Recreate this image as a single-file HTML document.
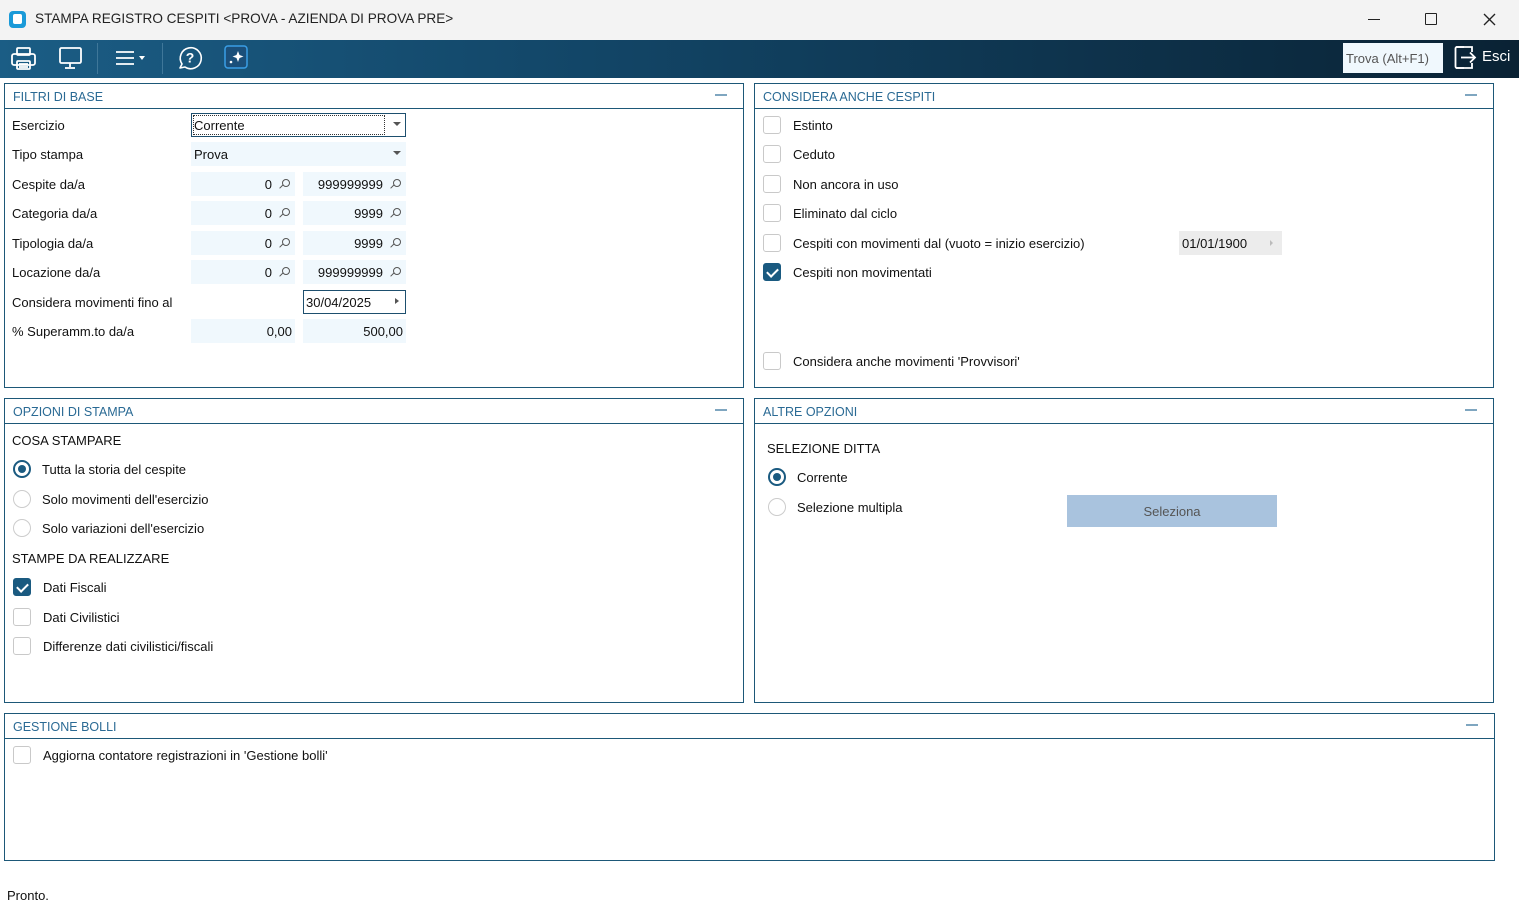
<!DOCTYPE html>
<html><head><meta charset="utf-8"><style>
*{box-sizing:border-box;margin:0;padding:0}
body{width:1519px;height:912px;background:#fff;font-family:"Liberation Sans","DejaVu Sans",sans-serif;font-size:13px;color:#111;position:relative;overflow:hidden}
.a{position:absolute}
.t{position:absolute;white-space:nowrap;line-height:14px;margin-top:0px}
.panel{position:absolute;border:1px solid #1d5878}
.ph{height:25px;border-bottom:1px solid #1d5878;color:#2a6a94;padding:6px 8px;font-size:12.5px;line-height:14px}
.min{position:absolute;right:16px;top:10px;width:12px;height:2px;background:#7fa6c0}
.cb{position:absolute;width:18px;height:18px;border:1px solid #c9c9c9;border-radius:3px;background:#fff}
.cb.on{background:#1a5a80;border-color:#1a5a80}
.cb.on::after{content:"";position:absolute;left:5px;top:2px;width:5px;height:9px;border:solid #fff;border-width:0 2px 2px 0;transform:rotate(45deg)}
.rd{position:absolute;width:18px;height:18px;border:1.5px solid #ccc;border-radius:50%}
.rd.on{border:2px solid #1a5a80}
.rd.on::after{content:"";position:absolute;left:3px;top:3px;width:8px;height:8px;border-radius:50%;background:#1a5a80}
.f{position:absolute;height:24px;background:#f0f8fd;text-align:right;padding-right:23px;line-height:25px}
.f.noi{padding-right:3px}
.lens{position:absolute;right:5px;top:7px;width:8px;height:8px;border:1.3px solid #555;border-radius:50%}
.lens::after{content:"";position:absolute;left:-4px;top:6px;width:5px;height:1.4px;background:#555;transform:rotate(-45deg)}
</style></head><body>
<div class="a" style="left:0;top:0;width:1519px;height:40px;background:#f3f3f3"></div>
<div class="a" style="left:9px;top:11px;width:17px;height:17px;border-radius:4px;background:#1a9ad8"></div>
<div class="a" style="left:13px;top:14px;width:9px;height:10px;border-radius:2px;background:#fff"></div>
<div class="t" style="left:35px;top:12px;font-size:13.6px;color:#222">STAMPA REGISTRO CESPITI &lt;PROVA - AZIENDA DI PROVA PRE&gt;</div>
<div class="a" style="left:1368px;top:19px;width:12px;height:1px;background:#222"></div>
<div class="a" style="left:1425px;top:13px;width:12px;height:12px;border:1.3px solid #222;border-radius:1px"></div>
<svg class="a" style="left:1483px;top:13px" width="13" height="13" stroke="#222" stroke-width="1.3"><line x1="1" y1="1" x2="12" y2="12"/><line x1="12" y1="1" x2="1" y2="12"/></svg>
<div class="a" style="left:0;top:40px;width:1519px;height:38px;background:linear-gradient(90deg,#1b5d85 0%,#124566 40%,#0a2234 100%)"></div>
<svg class="a" style="left:0;top:40px" width="260" height="38" fill="none" stroke="#fff" stroke-width="1.8">
<rect x="17" y="8" width="13" height="7" rx="1"/><rect x="12" y="14" width="23" height="11" rx="2"/><rect x="17" y="21" width="13" height="8" rx="1"/><line x1="19" y1="24" x2="28" y2="24"/><line x1="19" y1="27" x2="28" y2="27"/>
<rect x="60" y="8" width="21" height="15" rx="1.5"/><line x1="70" y1="23" x2="70" y2="27"/><line x1="65" y1="28" x2="75" y2="28"/>
<line x1="97.5" y1="3" x2="97.5" y2="34" stroke="#3f7799" stroke-width="1"/>
<line x1="116" y1="12" x2="134" y2="12"/><line x1="116" y1="18" x2="134" y2="18"/><line x1="116" y1="24" x2="134" y2="24"/>
<path d="M139 16 l6 0 l-3 4z" fill="#fff" stroke="none"/>
<line x1="162.5" y1="3" x2="162.5" y2="34" stroke="#3f7799" stroke-width="1"/>
<path d="M182 24 A10.5 10.5 0 1 1 185 27 L180 28 Z" stroke-width="1.6" stroke-linejoin="round"/>
<text x="190" y="22.5" fill="#fff" stroke="none" font-size="14" font-family="Liberation Sans" text-anchor="middle" font-weight="bold">?</text>
<rect x="225" y="6" width="22" height="22" rx="3" fill="#1b4f7a" stroke="#3a9ee6" stroke-width="1.5"/>
<path d="M238 11 l1.5 4 l4 1.5 l-4 1.5 l-1.5 4 l-1.5 -4 l-4 -1.5 l4 -1.5z" fill="#fff" stroke="none"/>
<circle cx="231" cy="22" r="1.3" fill="#fff" stroke="none"/>
</svg>
<div class="a" style="left:1343px;top:43px;width:100px;height:30px;background:#f0f8fd"></div>
<div class="t" style="left:1346px;top:52px;font-size:13px;color:#555">Trova (Alt+F1)</div>
<svg class="a" style="left:1453px;top:44px" width="28" height="28" fill="none" stroke="#fff" stroke-width="1.8"><path d="M11 3 h-7 a1.5 1.5 0 0 0 -1.5 1.5 v18 a1.5 1.5 0 0 0 1.5 1.5 h7"/><path d="M3 3 h16 v5 M19 19 v5 h-16"/><line x1="8" y1="13.5" x2="22" y2="13.5"/><path d="M17 8.5 l5 5 l-5 5"/></svg>
<div class="t" style="left:1482px;top:50px;font-size:15px;color:#fff">Esci</div>

<div class="panel" style="left:4px;top:83px;width:740px;height:305px"><div class="ph">FILTRI DI BASE</div><div class="min"></div></div>
<div class="t" style="left:12px;top:119px">Esercizio</div>
<div class="a" style="left:191px;top:113px;width:215px;height:24px;border:1px solid #1d4f6e"></div>
<div class="a" style="left:193px;top:115px;width:192px;height:20px;border:1px dotted #333"></div>
<div class="t" style="left:194px;top:119px">Corrente</div>
<div class="a" style="left:393px;top:122px;border:4px solid transparent;border-top:4px solid #555"></div>
<div class="t" style="left:12px;top:148px">Tipo stampa</div>
<div class="a" style="left:191px;top:142px;width:215px;height:24px;background:#f0f8fd"></div>
<div class="t" style="left:194px;top:148px">Prova</div>
<div class="a" style="left:393px;top:151px;border:4px solid transparent;border-top:4px solid #555"></div>

<div class="t" style="left:12px;top:178px">Cespite da/a</div>
<div class="f" style="left:191px;top:172px;width:104px">0<i class="lens"></i></div>
<div class="f" style="left:303px;top:172px;width:103px">999999999<i class="lens"></i></div>
<div class="t" style="left:12px;top:207px">Categoria da/a</div>
<div class="f" style="left:191px;top:201px;width:104px">0<i class="lens"></i></div>
<div class="f" style="left:303px;top:201px;width:103px">9999<i class="lens"></i></div>
<div class="t" style="left:12px;top:237px">Tipologia da/a</div>
<div class="f" style="left:191px;top:231px;width:104px">0<i class="lens"></i></div>
<div class="f" style="left:303px;top:231px;width:103px">9999<i class="lens"></i></div>
<div class="t" style="left:12px;top:266px">Locazione da/a</div>
<div class="f" style="left:191px;top:260px;width:104px">0<i class="lens"></i></div>
<div class="f" style="left:303px;top:260px;width:103px">999999999<i class="lens"></i></div>
<div class="t" style="left:12px;top:296px">Considera movimenti fino al</div>
<div class="a" style="left:303px;top:290px;width:103px;height:24px;border:1px solid #1d4f6e"></div>
<div class="t" style="left:306px;top:296px">30/04/2025</div>
<div class="a" style="left:395px;top:298px;border:3.5px solid transparent;border-left:4px solid #555"></div>
<div class="t" style="left:12px;top:325px">% Superamm.to da/a</div>
<div class="f noi" style="left:191px;top:319px;width:104px">0,00</div>
<div class="f noi" style="left:303px;top:319px;width:103px">500,00</div>

<div class="panel" style="left:754px;top:83px;width:740px;height:305px"><div class="ph">CONSIDERA ANCHE CESPITI</div><div class="min"></div></div>
<div class="cb" style="left:763px;top:116px"></div><div class="t" style="left:793px;top:119px">Estinto</div>
<div class="cb" style="left:763px;top:145px"></div><div class="t" style="left:793px;top:148px">Ceduto</div>
<div class="cb" style="left:763px;top:175px"></div><div class="t" style="left:793px;top:178px">Non ancora in uso</div>
<div class="cb" style="left:763px;top:204px"></div><div class="t" style="left:793px;top:207px">Eliminato dal ciclo</div>
<div class="cb" style="left:763px;top:234px"></div><div class="t" style="left:793px;top:237px">Cespiti con movimenti dal (vuoto = inizio esercizio)</div>
<div class="a" style="left:1179px;top:231px;width:103px;height:24px;background:#ececec"></div>
<div class="t" style="left:1182px;top:237px">01/01/1900</div>
<div class="a" style="left:1270px;top:240px;border:3px solid transparent;border-left:3.5px solid #bbb"></div>
<div class="cb on" style="left:763px;top:263px"></div><div class="t" style="left:793px;top:266px">Cespiti non movimentati</div>
<div class="cb" style="left:763px;top:352px"></div><div class="t" style="left:793px;top:355px">Considera anche movimenti 'Provvisori'</div>

<div class="panel" style="left:4px;top:398px;width:740px;height:305px"><div class="ph">OPZIONI DI STAMPA</div><div class="min"></div></div>
<div class="t" style="left:12px;top:434px">COSA STAMPARE</div>
<div class="rd on" style="left:13px;top:460px"></div><div class="t" style="left:42px;top:463px">Tutta la storia del cespite</div>
<div class="rd" style="left:13px;top:490px"></div><div class="t" style="left:42px;top:493px">Solo movimenti dell'esercizio</div>
<div class="rd" style="left:13px;top:519px"></div><div class="t" style="left:42px;top:522px">Solo variazioni dell'esercizio</div>
<div class="t" style="left:12px;top:552px">STAMPE DA REALIZZARE</div>
<div class="cb on" style="left:13px;top:578px"></div><div class="t" style="left:43px;top:581px">Dati Fiscali</div>
<div class="cb" style="left:13px;top:608px"></div><div class="t" style="left:43px;top:611px">Dati Civilistici</div>
<div class="cb" style="left:13px;top:637px"></div><div class="t" style="left:43px;top:640px">Differenze dati civilistici/fiscali</div>

<div class="panel" style="left:754px;top:398px;width:740px;height:305px"><div class="ph">ALTRE OPZIONI</div><div class="min"></div></div>
<div class="t" style="left:767px;top:442px">SELEZIONE DITTA</div>
<div class="rd on" style="left:768px;top:468px"></div><div class="t" style="left:797px;top:471px">Corrente</div>
<div class="rd" style="left:768px;top:498px"></div><div class="t" style="left:797px;top:501px">Selezione multipla</div>
<div class="a" style="left:1067px;top:495px;width:210px;height:32px;background:#a9c3de;color:#555;text-align:center;line-height:33px">Seleziona</div>

<div class="panel" style="left:4px;top:713px;width:1491px;height:148px"><div class="ph">GESTIONE BOLLI</div><div class="min"></div></div>
<div class="cb" style="left:13px;top:746px"></div><div class="t" style="left:43px;top:749px">Aggiorna contatore registrazioni in 'Gestione bolli'</div>

<div class="t" style="left:7px;top:889px">Pronto.</div>
</body></html>
